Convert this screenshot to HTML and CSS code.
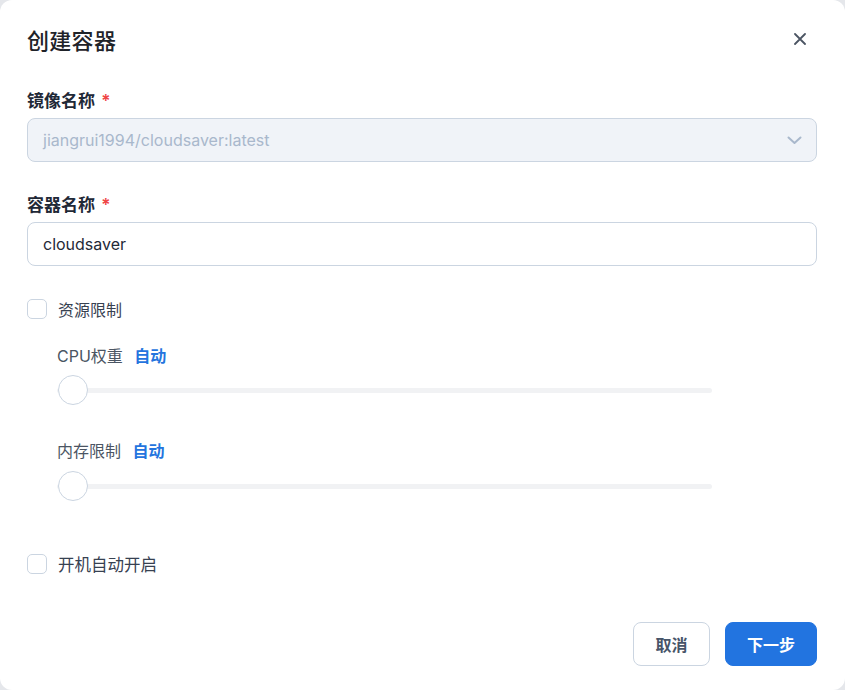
FILE: index.html
```html
<!DOCTYPE html>
<html lang="zh">
<head>
<meta charset="utf-8">
<link rel="stylesheet" href="styles.css">
</head>
<body>
<div class="dialog">
  <div class="header">
    <h1 class="title">创建容器</h1>
    <button class="close" aria-label="close">
      <svg width="12" height="12" viewBox="0 0 12 12"><path d="M1 1L11 11M11 1L1 11" stroke="#4b5563" stroke-width="1.8" stroke-linecap="round"/></svg>
    </button>
  </div>
  <div class="field">
    <div class="label">镜像名称 <span class="req">*</span></div>
    <div class="select">
      <span class="select-text">jiangrui1994/cloudsaver:latest</span>
      <svg class="chev" width="15" height="9" viewBox="0 0 15 9"><path d="M1.5 1.5L7.5 7L13.5 1.5" fill="none" stroke="#a9b8cc" stroke-width="2" stroke-linecap="round" stroke-linejoin="round"/></svg>
    </div>
  </div>
  <div class="field field2">
    <div class="label">容器名称 <span class="req">*</span></div>
    <div class="input">cloudsaver</div>
  </div>
  <label class="check check-first"><span class="box"></span><span>资源限制</span></label>
  <div class="sub">
    <div class="sub-label">CPU权重 <span class="auto">自动</span></div>
    <div class="slider slider1"><div class="track"></div><div class="thumb"></div></div>
    <div class="sub-label sub-label2">内存限制 <span class="auto">自动</span></div>
    <div class="slider"><div class="track"></div><div class="thumb"></div></div>
  </div>
  <label class="check check-second"><span class="box"></span><span>开机自动开启</span></label>
  <div class="footer">
    <button class="btn btn-cancel">取消</button>
    <button class="btn btn-primary">下一步</button>
  </div>
</div>
</body>
</html>
```
FILE: styles.css
```css
* { box-sizing: border-box; }
html, body { margin: 0; padding: 0; background: #e5e7eb; }
body { font-family: Inter, "Noto Sans CJK SC", sans-serif; }
.dialog {
  width: 845px;
  height: 690px;
  background: #fff;
  border-radius: 12px;
  padding: 0 28px 0 27px;
  display: flex;
  flex-direction: column;
}
.header {
  display: flex;
  align-items: center;
  justify-content: space-between;
  height: 80px;
  padding-bottom: 2px;
}
.title {
  margin: 0;
  font-size: 22px;
  font-weight: 500;
  color: #1f2329;
  letter-spacing: 0.3px;
}
.close {
  border: 0;
  background: none;
  padding: 0;
  margin-right: 11px;
  width: 12px;
  height: 12px;
  display: flex;
}
.field { margin-bottom: 18px; }
.field2 { margin-top: 4px; }
.label {
  font-size: 17px;
  font-weight: 600;
  color: #1f2937;
  height: 20px;
  line-height: 20px;
  margin-top: 11px;
  margin-bottom: 7px;
}
.req { color: #ef4444; font-weight: 600; margin-left: 2px; }
.select, .input {
  height: 44px;
  border: 1px solid #cbd5e1;
  border-radius: 8px;
  display: flex;
  align-items: center;
  padding: 0 14px 0 15px;
  font-size: 16px;
}
.select {
  background: #f0f3f8;
  justify-content: space-between;
  color: #a9b8cc;
}
.input { color: #1f2937; }
.check {
  display: flex;
  align-items: center;
  gap: 11px;
  font-size: 16px;
  color: #374151;
  height: 20px;
}
.check-first { margin-top: 15px; }
.check-second { margin-top: 52px; font-size: 16.5px; }
.box {
  width: 20px;
  height: 20px;
  border: 1px solid #cbd5e1;
  border-radius: 5px;
  background: #fff;
}
.sub { padding-left: 30px; width: 685px; }
.sub-label {
  font-size: 16px;
  color: #4b5563;
  margin-top: 27px;
  height: 20px;
  line-height: 20px;
}
.sub-label2 { margin-top: 35px; }
.auto { color: #2474de; font-weight: 700; margin-left: 7px; }
.slider {
  position: relative;
  height: 32px;
  margin-top: 9px;
  display: flex;
  align-items: center;
}
.slider1 { margin-top: 8px; }
.track {
  width: 100%;
  height: 5px;
  background: #f1f2f4;
  border-radius: 3px;
}
.thumb {
  position: absolute;
  left: 1px;
  top: 1px;
  width: 30px;
  height: 30px;
  border-radius: 50%;
  background: #fff;
  border: 1px solid #cbd5e1;
}
.footer {
  margin-top: auto;
  margin-bottom: 24px;
  display: flex;
  justify-content: flex-end;
  gap: 15px;
}
.btn {
  height: 44px;
  border-radius: 8px;
  font-family: Inter, "Noto Sans CJK SC", sans-serif;
  font-size: 16px;
  font-weight: 600;
  padding: 0;
}
.btn-cancel {
  width: 77px;
  background: #fff;
  border: 1px solid #cbd5e1;
  color: #475569;
}
.btn-primary {
  width: 92px;
  background: #2274e0;
  border: 1px solid #2274e0;
  color: #fff;
}
```
